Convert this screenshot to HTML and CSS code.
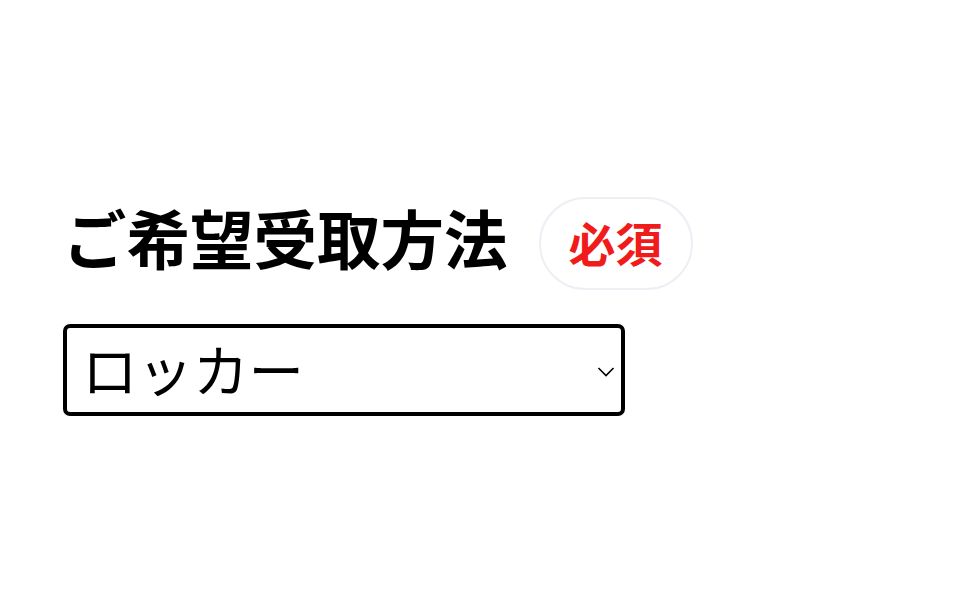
FILE: index.html
```html
<!DOCTYPE html>
<html lang="ja">
<head>
<meta charset="utf-8">
<link rel="stylesheet" href="styles.css">
</head>
<body>
<div class="field">
  <div class="label-row">
    <h1 class="label">ご希望受取方法</h1>
    <span class="badge">必須</span>
  </div>
  <div class="select-wrap">
    <select class="select">
      <option>ロッカー</option>
    </select>
    <svg class="chevron" width="18" height="12" viewBox="0 0 18 12"><path d="M1.5 2 L9 9.5 L16.5 2" fill="none" stroke="#000" stroke-width="1.6"/></svg>
  </div>
</div>
</body>
</html>
```
FILE: styles.css
```css
html, body {
  margin: 0;
  padding: 0;
  background: #fff;
}
body {
  font-family: "Noto Sans CJK JP", "Noto Sans", sans-serif;
  color: #000;
}
.field {
  padding: 197px 0 0 63px;
  display: flex;
  flex-direction: column;
  gap: 34px;
}
.label-row {
  display: flex;
  align-items: center;
  gap: 31px;
}
.label {
  margin: 0 0 13px;
  font-size: 63.5px;
  font-weight: 700;
  line-height: 1;
}
.badge {
  box-sizing: border-box;
  height: 93px;
  width: 154px;
  border: 2px solid #eceff4;
  border-radius: 47px;
  display: flex;
  align-items: center;
  justify-content: center;
  color: #f01c1c;
  font-size: 47px;
  font-weight: 700;
  line-height: 1;
  padding-bottom: 4px;
}
.select-wrap {
  position: relative;
  width: 562px;
  height: 92px;
}
.select {
  appearance: none;
  -webkit-appearance: none;
  box-sizing: border-box;
  width: 100%;
  height: 100%;
  margin: 0;
  border: 4px solid #000;
  border-radius: 7px;
  background: #fff;
  padding: 0 50px 10px 15px;
  font-family: "Noto Sans CJK JP", "Noto Sans", sans-serif;
  font-size: 55.5px;
  color: #000;
  outline: none;
}
.chevron {
  position: absolute;
  right: 10px;
  top: 42px;
}
```
